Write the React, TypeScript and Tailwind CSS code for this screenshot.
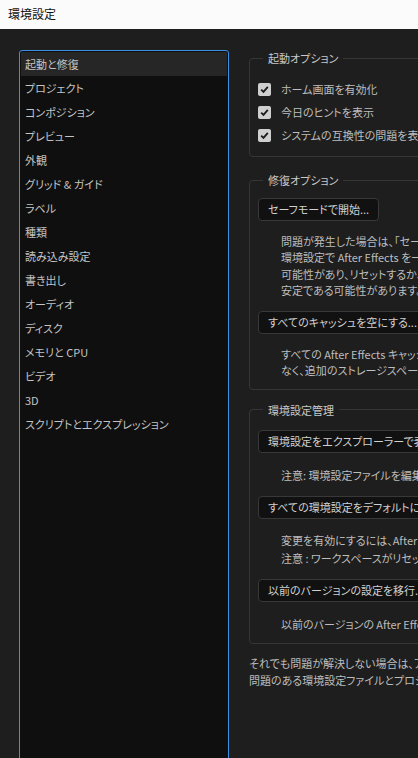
import React from "react";

const CATEGORIES = [
  "起動と修復",
  "プロジェクト",
  "コンポジション",
  "プレビュー",
  "外観",
  "グリッド & ガイド",
  "ラベル",
  "種類",
  "読み込み設定",
  "書き出し",
  "オーディオ",
  "ディスク",
  "メモリと CPU",
  "ビデオ",
  "3D",
  "スクリプトとエクスプレッション",
];

function Checkbox({ label }: { label: string }) {
  return (
    <div className="flex h-[23px] items-center gap-[10px]">
      <span className="flex h-[13px] w-[13px] items-center justify-center rounded-[2px] bg-[#cfcfcf]">
        <svg width="9" height="9" viewBox="0 0 9 9" fill="none">
          <path d="M1.2 4.6 L3.5 6.9 L7.8 1.8" stroke="#1b1b1b" strokeWidth="1.8" />
        </svg>
      </span>
      <span>{label}</span>
    </div>
  );
}

function Btn({ children }: { children: React.ReactNode }) {
  return (
    <div className="flex h-[23px] w-max items-center rounded-[4px] border border-[#383838] bg-[#111111] px-[9px] text-[#d0d0d0]">
      {children}
    </div>
  );
}

function Group({
  title,
  children,
  className,
}: {
  title: string;
  children: React.ReactNode;
  className?: string;
}) {
  return (
    <fieldset className={"rounded-[4px] border border-[#363636] px-2 " + (className ?? "")}>
      <legend className="ml-[5px] px-[5px] leading-4 text-[#c8c8c8]">{title}</legend>
      {children}
    </fieldset>
  );
}

export default function App() {
  return (
    <div className="h-screen w-screen overflow-hidden bg-[#1e1e1e] font-['Noto_Sans_CJK_JP',sans-serif] text-[11px] text-[#bdbdbd] [font-feature-settings:'palt']">
      <div className="flex h-[29px] items-center bg-[#fbfbfb] pl-2 pb-[1px] text-[12px] text-[#111111]">
        環境設定
      </div>

      <div className="flex gap-5 pl-[19px] pt-[21px]">
        {/* category list */}
        <div className="h-[720px] w-[210px] shrink-0 rounded-[3px] border border-[#3d8fe6] bg-[#0f0f0f] p-[1px]">
          {CATEGORIES.map((name, i) => (
            <div
              key={name}
              className={
                "flex h-6 items-center pl-1 text-[#c4c4c4] " +
                (i === 0 ? "bg-[#262626]" : "")
              }
            >
              {name}
            </div>
          ))}
        </div>

        {/* right side */}
        <div className="w-[320px] shrink-0 whitespace-nowrap">
          <Group title="起動オプション" className="pt-3 pb-[9px]">
            <Checkbox label="ホーム画面を有効化" />
            <Checkbox label="今日のヒントを表示" />
            <Checkbox label="システムの互換性の問題を表示" />
          </Group>

          <Group title="修復オプション" className="mt-[15px] pt-[10px] pb-[11px]">
            <Btn>セーフモードで開始...</Btn>
            <div className="ml-[23px] mt-3 leading-[16.4px]">
              <div>問題が発生した場合は、「セーフモードで開始」を使用して、</div>
              <div>環境設定で After Effects を一時的にリセットしてください。</div>
              <div>可能性があり、リセットするか、プラグインを無効にすると</div>
              <div>安定である可能性があります。</div>
            </div>
            <div className="mt-3">
              <Btn>すべてのキャッシュを空にする...</Btn>
            </div>
            <div className="ml-[23px] mt-3 leading-4">
              <div>すべての After Effects キャッシュを削除すると、パフォーマンスが</div>
              <div>なく、追加のストレージスペースが解放されます。</div>
            </div>
          </Group>

          <Group title="環境設定管理" className="mt-3 pt-3 pb-[11px]">
            <Btn>環境設定をエクスプローラーで表示</Btn>
            <div className="ml-[23px] mt-[14px] leading-4">
              注意: 環境設定ファイルを編集する前に After Effects を終了してください。
            </div>
            <div className="mt-[13px]">
              <Btn>すべての環境設定をデフォルトにリセット</Btn>
            </div>
            <div className="ml-[23px] mt-3 leading-[18px]">
              <div>変更を有効にするには、After Effects を再起動してください。</div>
              <div>注意 : ワークスペースがリセットされます。</div>
            </div>
            <div className="mt-3">
              <Btn>以前のバージョンの設定を移行...</Btn>
            </div>
            <div className="ml-[23px] mt-[14px] leading-4">
              以前のバージョンの After Effects から設定を移行します。
            </div>
          </Group>

          <div className="mt-[11px] leading-[17px]">
            <div>それでも問題が解決しない場合は、アドビのサポートにお問い合わせください。</div>
            <div>問題のある環境設定ファイルとプロジェクトを送信してください。</div>
          </div>
        </div>
      </div>
    </div>
  );
}
